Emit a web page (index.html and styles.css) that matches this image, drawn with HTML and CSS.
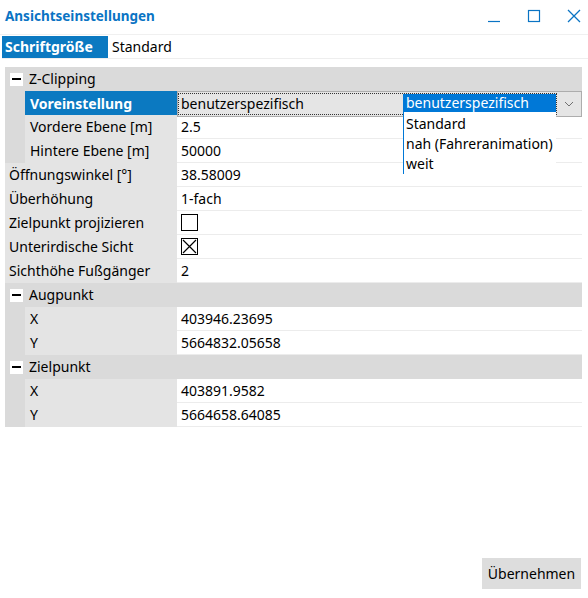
FILE: index.html
```html
<!DOCTYPE html>
<html lang="de">
<head>
<meta charset="utf-8">
<title>Ansichtseinstellungen</title>
<link rel="stylesheet" href="styles.css">
</head>
<body>
<div class="window">
  <header class="titlebar">
    <h1 class="title">Ansichtseinstellungen</h1>
    <div class="controls">
      <svg class="ctl" width="14" height="14" viewBox="0 0 14 14"><path d="M1 12.5H13" stroke="#0a74c4" stroke-width="1.2" fill="none"/></svg>
      <svg class="ctl" width="14" height="14" viewBox="0 0 14 14"><rect x="1.5" y="1.5" width="11" height="11" stroke="#0a74c4" stroke-width="1.2" fill="none"/></svg>
      <svg class="ctl" width="14" height="14" viewBox="0 0 14 14"><path d="M1 1L13 13M13 1L1 13" stroke="#0a74c4" stroke-width="1.3" fill="none"/></svg>
    </div>
  </header>

  <div class="fontrow">
    <span class="fontlabel">Schriftgröße</span>
    <span class="fontvalue">Standard</span>
  </div>

  <div class="grid">
    <div class="cat"><span class="minus"></span>Z-Clipping</div>

    <div class="row sub">
      <div class="indent"></div>
      <div class="label selected">Voreinstellung</div>
      <div class="value combo-cell">
        <div class="combo">
          <div class="combo-text">benutzerspezifisch</div>
          <div class="combo-btn">
            <svg width="10" height="6" viewBox="0 0 10 6"><path d="M1 1L5 5L9 1" stroke="#707070" stroke-width="1" fill="none"/></svg>
          </div>
        </div>
        <ul class="dropdown">
          <li class="active">benutzerspezifisch</li>
          <li>Standard</li>
          <li>nah (Fahreranimation)</li>
          <li>weit</li>
        </ul>
      </div>
    </div>
    <div class="row sub">
      <div class="indent"></div>
      <div class="label">Vordere Ebene [m]</div>
      <div class="value">2.5</div>
    </div>
    <div class="row sub">
      <div class="indent"></div>
      <div class="label">Hintere Ebene [m]</div>
      <div class="value">50000</div>
    </div>

    <div class="row">
      <div class="label">Öffnungswinkel [°]</div>
      <div class="value">38.58009</div>
    </div>
    <div class="row">
      <div class="label">Überhöhung</div>
      <div class="value">1-fach</div>
    </div>
    <div class="row">
      <div class="label">Zielpunkt projizieren</div>
      <div class="value"><span class="check"></span></div>
    </div>
    <div class="row">
      <div class="label">Unterirdische Sicht</div>
      <div class="value"><span class="check checked"><svg width="17" height="17" viewBox="0 0 17 17"><path d="M2 2L15 15M15 2L2 15" stroke="#000" stroke-width="1.2"/></svg></span></div>
    </div>
    <div class="row">
      <div class="label">Sichthöhe Fußgänger</div>
      <div class="value">2</div>
    </div>

    <div class="cat"><span class="minus"></span>Augpunkt</div>
    <div class="row sub">
      <div class="indent"></div>
      <div class="label">X</div>
      <div class="value">403946.23695</div>
    </div>
    <div class="row sub">
      <div class="indent"></div>
      <div class="label">Y</div>
      <div class="value">5664832.05658</div>
    </div>

    <div class="cat"><span class="minus"></span>Zielpunkt</div>
    <div class="row sub">
      <div class="indent"></div>
      <div class="label">X</div>
      <div class="value">403891.9582</div>
    </div>
    <div class="row sub">
      <div class="indent"></div>
      <div class="label">Y</div>
      <div class="value">5664658.64085</div>
    </div>
  </div>

  <div class="footer">
    <button class="apply">Übernehmen</button>
  </div>
</div>
</body>
</html>
```

FILE: styles.css
```css
* { box-sizing: border-box; }
html, body { margin: 0; padding: 0; background: #fff; }
body {
  font-family: "Noto Sans", "Open Sans", "Liberation Sans", sans-serif;
  font-size: 14px;
  color: #000;
}
.window {
  width: 588px;
  height: 598px;
  display: flex;
  flex-direction: column;
}
.titlebar {
  height: 35px;
  display: flex;
  align-items: center;
  justify-content: space-between;
  border-bottom: 1px solid #f0f0f0;
  padding: 0 7px 2px 5px;
}
.title {
  margin: 0;
  font-size: 13.5px;
  font-weight: bold;
  color: #0a74c4;
}
.controls {
  display: flex;
  gap: 26px;
}
.ctl { display: block; }

.fontrow {
  margin: 1px 0 0 2px;
  height: 23px;
  display: flex;
  align-items: stretch;
  border-bottom: 1px solid #eeeeee;
}
.fontlabel {
  background: #0b79c1;
  color: #fff;
  font-weight: bold;
  padding: 0 5px 1px 3px;
  display: flex;
  align-items: center;
  width: 106px;
  white-space: nowrap;
}
.fontvalue {
  display: flex;
  align-items: center;
  padding: 0 0 1px 4px;
}

.grid {
  margin: 8px 6px 0 5px;
  display: flex;
  flex-direction: column;
}
.cat {
  height: 24px;
  background: #dadada;
  display: flex;
  align-items: center;
  padding: 0 0 2px 5px;
}
.minus {
  width: 13px;
  height: 13px;
  background: #fff;
  margin: 2px 6px 0 0;
  display: flex;
  align-items: center;
  justify-content: center;
}
.minus::after {
  content: "";
  width: 9px;
  height: 2px;
  background: #000;
}
.row {
  height: 24px;
  display: grid;
  grid-template-columns: 172px 1fr;
}
.row.sub {
  grid-template-columns: 20px 152px 1fr;
}
.indent { background: #dadada; }
.label {
  background: #e4e4e4;
  display: flex;
  align-items: center;
  padding: 0 0 2px 4px;
  white-space: nowrap;
}
.row.sub .label { padding-left: 5px; }
.label.selected {
  background: #0b79c1;
  color: #fff;
  font-weight: bold;
}
.value {
  background: #fff;
  display: flex;
  align-items: center;
  padding: 0 0 1px 4px;
  border-bottom: 1px solid #ececec;
}
.check {
  width: 17px;
  height: 17px;
  border: 1px solid #000;
  display: block;
  position: relative;
}
.check svg {
  position: absolute;
  left: -1px;
  top: -1px;
}

.combo-cell {
  position: relative;
  padding: 0;
  border-bottom: none;
  align-items: flex-start;
  z-index: 2;
}
.combo {
  width: 100%;
  height: 26px;
  background: #e5e5e5;
  border: 1px solid #adadad;
  display: flex;
}
.combo-text {
  flex: 1;
  margin: 1px 0;
  border: 1px dotted #333;
  padding: 0 0 2px 2px;
  display: flex;
  align-items: center;
}
.combo-btn {
  width: 24px;
  display: flex;
  align-items: center;
  justify-content: center;
}
.dropdown {
  position: absolute;
  left: 226px;
  top: 3px;
  width: 153px;
  height: 80px;
  margin: 0;
  padding: 0;
  list-style: none;
  background: #fff;
  border-left: 1px solid #0078d7;
  overflow: hidden;
}
.dropdown li {
  height: 20px;
  line-height: 20px;
  padding-left: 2px;
  white-space: nowrap;
}
.dropdown li.active {
  background: #0078d7;
  color: #fff;
  height: 18px;
  line-height: 18px;
  margin-bottom: 2px;
}

.footer {
  margin-top: auto;
  display: flex;
  justify-content: flex-end;
  padding: 0 7px 9px 0;
}
.apply {
  width: 99px;
  height: 31px;
  border: none;
  background: #dddddd;
  font-family: inherit;
  font-size: 14px;
  color: #000;
  padding: 0 0 1px;
}
```
